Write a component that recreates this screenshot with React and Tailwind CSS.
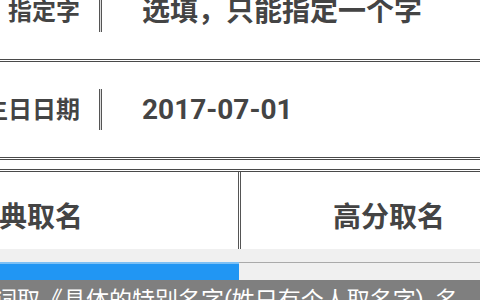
import React from 'react';

const FONT = { fontFamily: 'Roboto, "Noto Sans CJK SC", "Noto Sans", sans-serif' };

const FormRow = ({ label, value, className = '' }) => (
  <div className={`flex items-center h-[98px] border-b-[3px] border-double border-[#4a4a4a] ${className}`}>
    <div className="w-[80px] shrink-0 flex justify-end">
      <span className="shrink-0 whitespace-nowrap text-[24px] font-bold text-[#444]">{label}</span>
    </div>
    <div className="ml-[19px] w-[3px] h-[41px] shrink-0 border-x border-[#555] bg-[#ddd]" />
    <div className="ml-[40px] whitespace-nowrap text-[28px] font-bold text-[#444]">{value}</div>
  </div>
);

export default function App() {
  return (
    <div className="relative w-[480px] h-[300px] overflow-hidden bg-white" style={FONT}>
      <FormRow label="指定字" value="选填，只能指定一个字" className="-mt-[36px]" />
      <FormRow label="生日日期" value="2017-07-01" />

      {/* tabs */}
      <div className="mt-[9px] border-t-[3px] border-double border-[#4a4a4a] flex h-[80px]">
        <div className="w-[238px] shrink-0 flex items-center justify-end pr-[155px] pt-[14px]">
          <span className="shrink-0 whitespace-nowrap text-[28px] font-bold text-[#444]">经典取名</span>
        </div>
        <div className="w-[3px] shrink-0 border-x border-[#555] bg-white" />
        <div className="flex-1 flex items-center pl-[92px] pt-[14px]">
          <span className="whitespace-nowrap text-[28px] font-bold text-[#444]">高分取名</span>
        </div>
      </div>

      {/* tab indicator strip */}
      <div className="h-[13px] bg-[#f0f0f0]" />
      <div className="flex h-[18px]">
        <div className="w-[239px] shrink-0 bg-[#2196f3] border-t-2 border-[#7cc0f5]" />
        <div className="flex-1 bg-[#f0f0f0] border-t border-[#aaa]" />
      </div>

      {/* toast overlay */}
      <div className="absolute left-0 right-0 bottom-0 h-[20px] bg-black/50 overflow-hidden">
        <div className="whitespace-nowrap text-[23px] leading-[23px] pt-[9px] -ml-[6px] text-white">
          词取《具体的特别名字(姓只有个人取名字)&nbsp;&nbsp;名
        </div>
      </div>
    </div>
  );
}
